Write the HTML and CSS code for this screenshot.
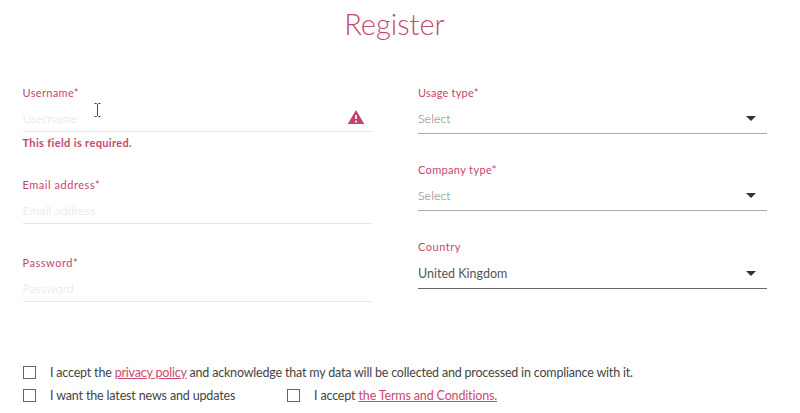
FILE: index.html
```html
<!DOCTYPE html>
<html lang="en">
<head>
<meta charset="utf-8">
<title>Register</title>
<link rel="stylesheet" href="styles.css">
</head>
<body>
<main class="page">
  <h1><span>Register</span></h1>
  <form>
    <div class="columns">
      <div class="col left">
        <div class="field user">
          <label><span>Username*</span></label>
          <div class="input"><span>Username</span>
            <svg class="warn" width="18" height="16" viewBox="0 0 18 16"><path d="M9 1 17.3 15H.7Z" fill="#c6416c"/><path d="M9 6v4M9 11.5v2" stroke="#fff" stroke-width="1.7"/></svg>
          </div>
          <p class="error"><span>This field is required.</span></p>
        </div>
        <div class="field email">
          <label class="wide"><span>Email address*</span></label>
          <div class="input"><span>Email address</span></div>
        </div>
        <div class="field">
          <label class="wide"><span>Password*</span></label>
          <div class="input"><span>Password</span></div>
        </div>
      </div>
      <div class="col right">
        <div class="field">
          <label class="tight"><span>Usage type*</span></label>
          <div class="select"><span>Select</span><i class="arrow"></i></div>
        </div>
        <div class="field">
          <label><span>Company type*</span></label>
          <div class="select"><span>Select</span><i class="arrow"></i></div>
        </div>
        <div class="field">
          <label class="wide"><span>Country</span></label>
          <div class="select chosen"><span>United Kingdom</span><i class="arrow"></i></div>
        </div>
      </div>
    </div>
    <div class="checks">
      <div class="check consent"><i class="box"></i><span>I accept the <a>privacy policy</a> and acknowledge that my data will be collected and processed in compliance with it.</span></div>
      <div class="row">
        <div class="check news"><i class="box"></i><span>I want the latest news and updates</span></div>
        <div class="check"><i class="box"></i><span>I accept <a>the Terms and Conditions.</a></span></div>
      </div>
    </div>
  </form>
  <svg class="cursor" width="7" height="14" viewBox="0 0 7 14"><path d="M.5 .5H2.5L3.5 1.5 4.5 .5H6.5M3.5 1.5V12.5M.5 13.5H2.5L3.5 12.5 4.5 13.5H6.5" fill="none" stroke="#444"/></svg>
</main>
</body>
</html>
```
FILE: styles.css
```css
* { box-sizing: border-box; }
body { margin: 0; background: #fff; color: #444; font-family: Lato, sans-serif; font-size: 12.5px; }
.page { position: relative; height: 413px; overflow: hidden; }
h1 { margin: 0; padding-top: 6px; height: 84px; padding-right: 11px; text-align: center; font-weight: 300; font-size: 29px; line-height: 36px; color: #c34a70; }
.columns { display: grid; grid-template-columns: 349px 349px; gap: 46px; padding-left: 23px; height: 276px; }
label { display: block; height: 18px; line-height: 18px; font-size: 11px; letter-spacing: .34px; color: #c6466f; }
.wide { letter-spacing: .54px; }
.tight { letter-spacing: .2px; }
.input, .select { display: flex; align-items: center; justify-content: space-between; }
.input { height: 30px; padding-top: 4px; border-bottom: 1px solid #e6e6e6; color: #e2e2e2; font-weight: 300; }
.warn { margin-right: 7px; margin-top: -3px; }
.error { margin: 2px 0 0; line-height: 17px; font-size: 11px; font-weight: 700; letter-spacing: .36px; color: #c6466f; }
.left .field { margin-left: -.5px; }
.user { height: 92px; }
.email { height: 78px; }
.right .field { height: 77px; }
.select { height: 32px; padding: 2px 11px 0 0; border-bottom: 1px solid #aaa; color: #777; font-weight: 300; }
.right .select { height: 32px; }
.right .select.chosen { height: 33px; color: #555; font-weight: 400; border-color: #666; }
.arrow { border: 5.5px solid transparent; border-top-color: #333; border-bottom: 0; }
.checks { padding: 1px 0 0 23px; }
.check { display: flex; align-items: center; height: 23px; white-space: nowrap; letter-spacing: -.15px; }
.consent { letter-spacing: -.19px; }
.box { width: 13px; height: 13px; border: 1px solid #666; margin-right: 14px; }
.row { display: flex; }
.news { width: 264px; }
a { color: #cc4870; text-decoration: underline; }
.cursor { position: absolute; left: 94px; top: 103px; }
```
